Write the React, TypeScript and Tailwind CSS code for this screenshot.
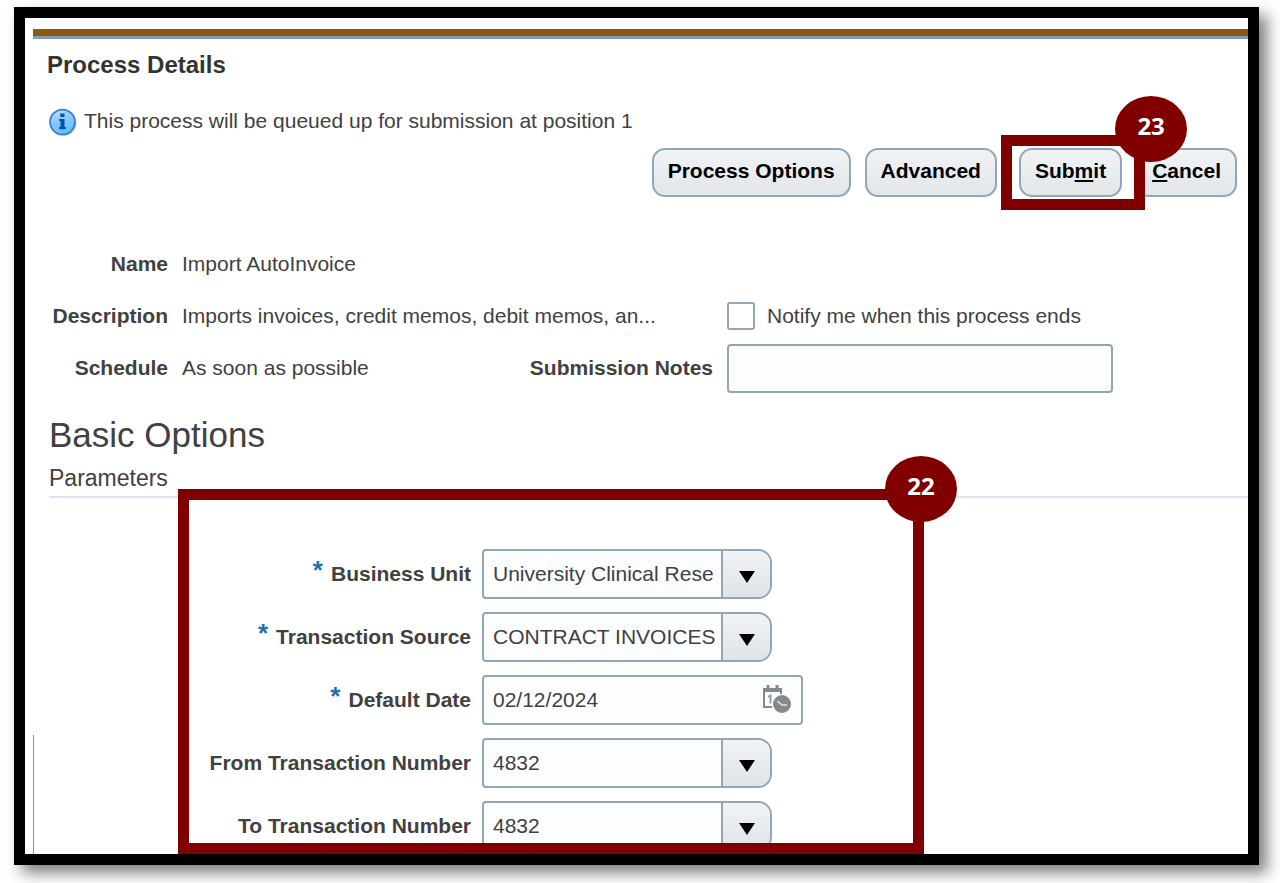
import React from "react";

type Field = { id: string; label: string; value: string; required?: boolean; kind: "select" | "date" };

const fields: Field[] = [
  { id: "business-unit", label: "Business Unit", value: "University Clinical Rese", required: true, kind: "select" },
  { id: "transaction-source", label: "Transaction Source", value: "CONTRACT INVOICES", required: true, kind: "select" },
  { id: "default-date", label: "Default Date", value: "02/12/2024", required: true, kind: "date" },
  { id: "from-number", label: "From Transaction Number", value: "4832", kind: "select" },
  { id: "to-number", label: "To Transaction Number", value: "4832", kind: "select" },
];

const buttonClass =
  "h-[49px] rounded-[13px] border-2 border-[#93a6b7] bg-gradient-to-b from-[#f1f3f5] to-[#e2e6e9] px-[14px] pb-1 font-bold text-black whitespace-nowrap";

function InfoIcon() {
  return (
    <svg width="28" height="30" viewBox="0 0 28 30" className="shrink-0" aria-hidden="true">
      <defs>
        <linearGradient id="info-fill" x1="0" y1="0" x2="0.4" y2="1">
          <stop offset="0" stopColor="#c4e0fb" />
          <stop offset="0.5" stopColor="#8cc8fb" />
          <stop offset="1" stopColor="#62c4fd" />
        </linearGradient>
      </defs>
      <circle cx="14.5" cy="17" r="12.8" fill="#8a94a3" opacity="0.6" />
      <circle cx="13.5" cy="16" r="12.4" fill="url(#info-fill)" stroke="#3a7fd5" strokeWidth="1.8" />
      <path d="M11.2 7.5h4.300v3.600h-4.300zM10.2 13h5.300v8h1.300v2.200h-6.600v-2.200h1.300v-5.800h-1.300z" fill="#0b50ae" />
    </svg>
  );
}

function CalendarClockIcon() {
  return (
    <svg width="30" height="30" viewBox="0 0 30 30" aria-hidden="true">
      <path d="M10 22H2V4h17v5" fill="none" stroke="#85898c" strokeWidth="2" />
      <path d="M1 3h19v4H1z" fill="#85898c" />
      <path d="M6 0v6M15 0v6" stroke="#85898c" strokeWidth="3" />
      <path d="M6 12l2.500-1.500v8" fill="none" stroke="#9a9ea1" strokeWidth="2" />
      <circle cx="20" cy="19" r="9" fill="#85898c" />
      <path d="M15.500 16l4.500 4h5" fill="none" stroke="#dfe3e6" strokeWidth="1.600" />
    </svg>
  );
}

function StepBadge({ step, className }: { step: number; className: string }) {
  return (
    <span
      className={`absolute flex h-[66px] w-[72px] items-center justify-center rounded-[50%] bg-[#800000] pb-[6px] font-['Open_Sans',sans-serif] text-[24px] font-bold text-white ${className}`}
    >
      {step}
    </span>
  );
}

function SelectBox({ id, value }: { id: string; value: string }) {
  return (
    <div className="flex h-[50px] w-[290px] overflow-hidden rounded-l-[4px] rounded-r-[14px] border-2 border-[#93a6b7] bg-[#fcfdff]">
      <select id={id} className="min-w-0 flex-1 appearance-none bg-transparent pr-[6px] pl-[9px] outline-none">
        <option>{value}</option>
      </select>
      <span className="flex w-[49px] items-center justify-center border-l-2 border-[#93a6b7] bg-gradient-to-b from-[#f1f3f5] to-[#e0e4e7] pt-[6px]">
        <svg width="16" height="12" viewBox="0 0 16 12" aria-hidden="true">
          <path d="M0 0h16L8 12z" fill="#000" />
        </svg>
      </span>
    </div>
  );
}

function DateBox({ id, value }: { id: string; value: string }) {
  return (
    <div className="flex h-[50px] w-[321px] items-center rounded-[4px] border-2 border-[#93a6b7] bg-[#fcfdff] px-[9px]">
      <input id={id} type="text" defaultValue={value} className="min-w-0 flex-1 bg-transparent outline-none" />
      <button type="button" aria-label="Select date and time">
        <CalendarClockIcon />
      </button>
    </div>
  );
}

export default function App() {
  return (
    <div className="flex min-h-screen bg-white pt-[7px] pr-[21px] pb-[18px] pl-[14px] font-['Liberation_Sans',Arial,sans-serif] text-[21px] text-[#414141]">
      <main className="relative min-w-0 flex-1 border-[11px] border-black bg-white pt-[11px] shadow-[8px_8px_14px_rgba(0,0,0,0.5)]">
        <div className="ml-2 h-[10px] border-b-[3px] border-[#7f9bb8] bg-[#8b5a12]" />

        <h1 className="mt-[10px] pl-[22px] text-[24px] leading-8 font-bold text-[#333333]">Process Details</h1>

        <div className="mt-6 flex h-8 items-center gap-[7px] pl-6">
          <InfoIcon />
          <p>This process will be queued up for submission at position 1</p>
        </div>

        <div className="mt-[11px] flex justify-end gap-[14px] pr-[11px]">
          <button type="button" className={buttonClass}>Process Options</button>
          <button type="button" className={buttonClass}>Advanced</button>
          <div className="relative z-10 ml-2">
            <button type="button" className={buttonClass}>
              Sub<u>m</u>it
            </button>
            <div className="pointer-events-none absolute -top-[13px] -right-[23px] -bottom-[13px] -left-[18px] border-[11px] border-[#800000]">
              <StepBadge step={23} className="-top-[50px] -right-[53px]" />
            </div>
          </div>
          <button type="button" className={buttonClass}>
            <u>C</u>ancel
          </button>
        </div>

        <div className="mt-[42px] grid auto-rows-[50px] grid-cols-[143px_327px_190px_386px] items-center gap-x-[14px] gap-y-[2px] whitespace-nowrap">
          <span className="text-right font-bold">Name</span>
          <span className="col-span-3">Import AutoInvoice</span>

          <span className="text-right font-bold">Description</span>
          <span className="col-span-2">Imports invoices, credit memos, debit memos, an...</span>
          <label className="flex items-center gap-3">
            <input type="checkbox" className="size-7 appearance-none rounded-[3px] border-2 border-[#93a6b7] bg-white" />
            Notify me when this process ends
          </label>

          <span className="text-right font-bold">Schedule</span>
          <span>As soon as possible</span>
          <label htmlFor="notes" className="text-right font-bold">Submission Notes</label>
          <input id="notes" type="text" className="h-[49px] rounded-[4px] border-2 border-[#93a6b7] bg-[#fcfdff] px-[9px] outline-none" />
        </div>

        <h2 className="mt-[22px] pl-6 text-[35px] leading-10">Basic Options</h2>
        <h3 className="mt-[5px] ml-6 border-b-2 border-[#dfe5ec] text-[23px] leading-9">Parameters</h3>

        <section className="relative grid grid-cols-[446px_auto] items-center gap-x-[11px] gap-y-[13px] pt-[51px] pb-[3px]">
          {fields.map((field) => (
            <React.Fragment key={field.id}>
              <label htmlFor={field.id} className="flex items-center justify-end gap-2 font-bold whitespace-nowrap">
                {field.required && <span className="pb-2 text-[26px] leading-8 text-[#1f6fb2]">*</span>}
                {field.label}
              </label>
              {field.kind === "date" ? (
                <DateBox id={field.id} value={field.value} />
              ) : (
                <SelectBox id={field.id} value={field.value} />
              )}
            </React.Fragment>
          ))}
          <div className="pointer-events-none absolute -top-[9px] bottom-0 left-[153px] w-[746px] border-[11px] border-[#800000]">
            <StepBadge step={22} className="-top-[44px] -right-[44px]" />
          </div>
        </section>

        {/* edge of the panel behind */}
        <div className="absolute bottom-0 left-2 h-[119px] w-px bg-[#7f93a8]" />
      </main>
    </div>
  );
}
